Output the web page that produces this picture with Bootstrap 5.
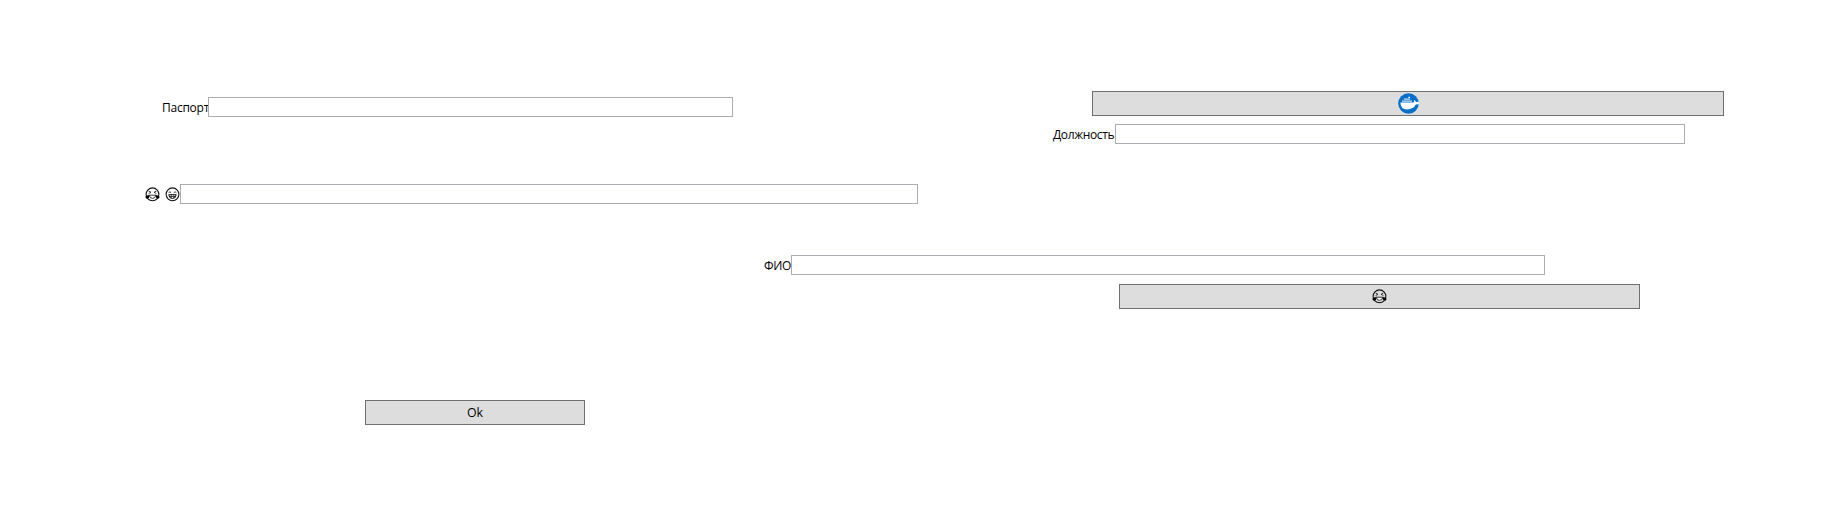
<!DOCTYPE html>
<html lang="ru">
<head>
<meta charset="utf-8">
<meta name="viewport" content="width=device-width, initial-scale=1">
<title>Форма</title>
<link href="https://cdn.jsdelivr.net/npm/bootstrap@5.3.0/dist/css/bootstrap.min.css" rel="stylesheet">
<style>
body{font:12px/16px "Open Sans","Noto Sans",sans-serif;color:#000;background:#fff}
.canvas-form{height:531px;padding-top:91px}
.canvas-form .form-control{height:20px;min-height:0;padding:0 3px;font-size:12px;border:1px solid #abadb3;border-radius:0;background:#fff}
.canvas-form .btn{height:25px;padding:0;font-size:12.4px;line-height:23px;color:#000;background:#ddd;border:1px solid #707070;border-radius:0}
.canvas-form label{flex:none;height:20px;padding-top:3px;white-space:nowrap}
.field-passport{width:571px;margin:6px 0 0 162px}
.field-passport label{width:46px;letter-spacing:-.25px}
.col-post{width:671px;margin-left:320px}
.btn-docker{width:632px;margin-left:39px}
.field-post{width:632px;margin-top:8px}
.field-post label{width:62px;letter-spacing:-.35px}
.field-emoji{width:773px;margin:40px 0 0 145px}
.field-emoji label{width:35px}
.field-name{width:781px;margin:51px 0 0 764px}
.field-name label{width:27px;letter-spacing:-.4px}
.btn-joy{width:521px;margin:9px 0 0 1119px}
.btn-ok{width:220px;margin:91px 0 0 365px}
svg{flex:none}
</style>
</head>
<body>
<svg class="d-none">
  <symbol id="joy" viewBox="0 0 15 15">
    <circle cx="7.5" cy="7.3" r="6.4" fill="none" stroke="#111" stroke-width="1.1"/>
    <path d="M3.6 4L6 5.3L3.6 6.6M11.4 4L9 5.3L11.4 6.6" fill="none" stroke="#222" stroke-width=".9"/>
    <path d="M4.2 8.2H10.8Q10.4 11.4 7.5 11.4T4.2 8.2Z" fill="#fff" stroke="#222" stroke-width=".9"/>
    <path d="M4.3 8Q4.6 11.6 1.9 11.7Q.2 11.5.5 9.6Q1.6 8 4.3 8ZM10.7 8Q10.4 11.6 13.1 11.7Q14.8 11.5 14.5 9.6Q13.4 8 10.7 8Z" fill="#000"/>
  </symbol>
  <symbol id="grin" viewBox="0 0 15 15">
    <circle cx="7.5" cy="7.3" r="6.4" fill="none" stroke="#111" stroke-width="1.1"/>
    <path d="M3.6 5.7Q4.9 3.9 6.2 5.7M8.8 5.7Q10.1 3.9 11.4 5.7" fill="none" stroke="#222" stroke-width=".9"/>
    <path d="M3.8 7.7H11.2Q11 11.5 7.5 11.5T3.8 7.7Z" fill="#fff" stroke="#111" stroke-width="1"/>
    <path d="M4.3 9.5H10.7M6.2 8V11.2M8.8 8V11.2" stroke="#222" stroke-width=".8"/>
  </symbol>
</svg>
<main class="canvas-form">
  <div class="d-flex align-items-start">
    <div class="field-passport d-flex">
      <label for="passport">Паспорт</label><input id="passport" class="form-control">
    </div>
    <div class="col-post">
      <button class="btn btn-docker d-flex justify-content-center align-items-center" aria-label="Docker">
        <svg width="21" height="21" viewBox="0 0 21 21">
          <circle cx="10.5" cy="10.5" r="10.3" fill="#066fc9"/>
          <path d="M2.4 9.6H15.4Q16.6 9.3 15.9 7Q17.6 7.6 18 9L20.9 8.8V11.2L17.8 11.6Q15.6 16.4 9 16.4Q2.4 16.4 2.4 9.6Z" fill="#fff"/>
          <path d="M4.2 8.2H14.2M6.2 6.1H12.2M10.4 4.3H12.2" stroke="#fff" stroke-width="1.2" stroke-dasharray="1.6 .4"/>
        </svg>
      </button>
      <div class="field-post d-flex">
        <label for="post">Должность</label><input id="post" class="form-control">
      </div>
    </div>
  </div>
  <div class="field-emoji d-flex">
    <label for="mood" class="d-flex justify-content-between" aria-label="Смех"><svg width="15" height="15"><use href="#joy"/></svg><svg width="15" height="15"><use href="#grin"/></svg></label><input id="mood" class="form-control">
  </div>
  <div class="field-name d-flex">
    <label for="name">ФИО</label><input id="name" class="form-control">
  </div>
  <button class="btn btn-joy d-flex justify-content-center align-items-center" aria-label="Смех"><svg width="15" height="15"><use href="#joy"/></svg></button>
  <button class="btn btn-ok d-block">Ok</button>
</main>
<script src="https://cdn.jsdelivr.net/npm/bootstrap@5.3.0/dist/js/bootstrap.bundle.min.js"></script>
</body>
</html>
